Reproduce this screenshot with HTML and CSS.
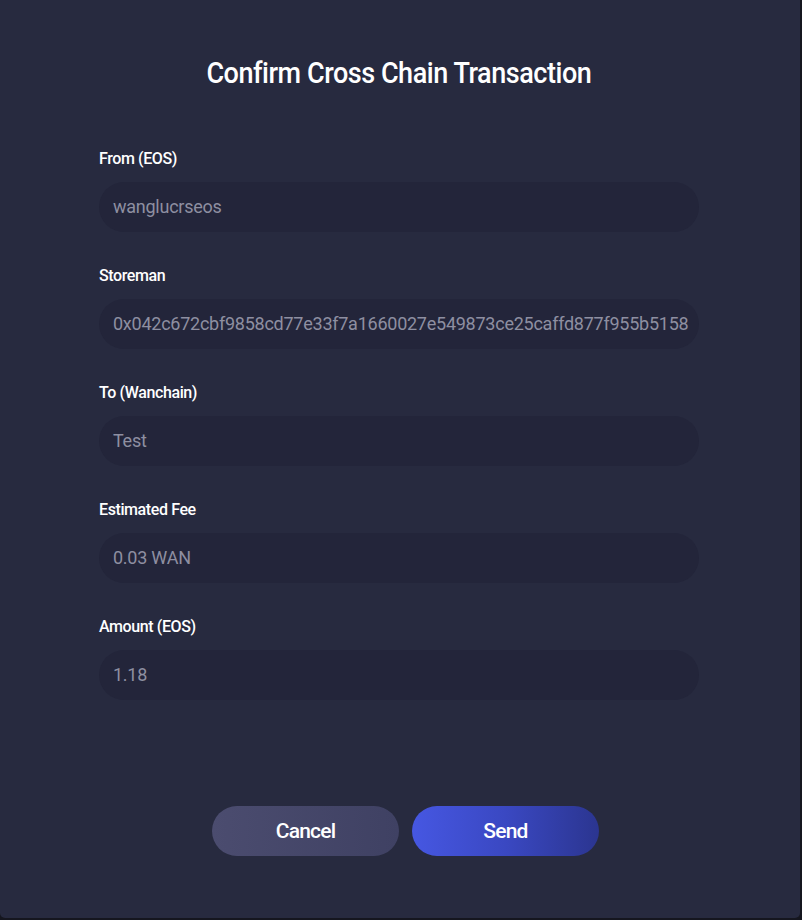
FILE: index.html
```html
<!DOCTYPE html>
<html lang="en">
<head>
<meta charset="utf-8">
<title>Confirm Cross Chain Transaction</title>
<link rel="stylesheet" href="styles.css">
</head>
<body>
<div class="modal">
  <h1 class="modal-title"><span class="modal-title-text">Confirm Cross Chain Transaction</span></h1>
  <div class="form">
    <div class="field">
      <label class="field-label">From (EOS)</label>
      <div class="field-input">wanglucrseos</div>
    </div>
    <div class="field">
      <label class="field-label">Storeman</label>
      <div class="field-input">0x042c672cbf9858cd77e33f7a1660027e549873ce25caffd877f955b5158</div>
    </div>
    <div class="field">
      <label class="field-label">To (Wanchain)</label>
      <div class="field-input">Test</div>
    </div>
    <div class="field">
      <label class="field-label">Estimated Fee</label>
      <div class="field-input">0.03 WAN</div>
    </div>
    <div class="field">
      <label class="field-label">Amount (EOS)</label>
      <div class="field-input">1.18</div>
    </div>
  </div>
  <div class="actions">
    <button class="btn btn-cancel">Cancel</button>
    <button class="btn btn-send">Send</button>
  </div>
</div>
</body>
</html>
```

FILE: styles.css
```css
html, body {
  margin: 0;
  padding: 0;
  background: #15161f;
}
body {
  width: 802px;
  height: 920px;
  font-family: Roboto, "Liberation Sans", sans-serif;
}
.modal {
  box-sizing: border-box;
  width: 800px;
  height: 918px;
  background: #272a3f;
  border-radius: 0 0 5px 5px;
  padding: 55px 101px 0 99px;
  display: flex;
  flex-direction: column;
}
.modal-title {
  margin: 0;
  text-align: center;
  color: #ffffff;
  font-size: 30px;
  line-height: 36px;
  font-weight: 500;
}
.modal-title-text {
  display: inline-block;
  letter-spacing: -0.5px;
  transform: scaleX(0.9);
}
.form {
  margin-top: 58px;
  display: flex;
  flex-direction: column;
  gap: 34px;
}
.field {
  display: flex;
  flex-direction: column;
  gap: 13px;
}
.field-label {
  color: #ffffff;
  font-size: 16px;
  line-height: 20px;
  font-weight: 500;
  letter-spacing: -0.4px;
}
.field-input {
  box-sizing: border-box;
  height: 50px;
  border-radius: 25px;
  background: #23253a;
  padding: 0 14px;
  color: #8e8fa1;
  font-size: 18px;
  line-height: 50px;
  letter-spacing: -0.25px;
  white-space: nowrap;
  overflow: hidden;
}
.actions {
  margin-top: 106px;
  padding-left: 13px;
  display: flex;
  justify-content: center;
  gap: 13px;
}
.btn {
  width: 187px;
  height: 50px;
  border: none;
  border-radius: 25px;
  color: #ffffff;
  font-family: Roboto, "Liberation Sans", sans-serif;
  font-size: 21px;
  font-weight: 500;
  letter-spacing: -0.8px;
  cursor: pointer;
}
.btn-cancel {
  background: linear-gradient(90deg, #4b4c6f 0%, #3f4163 100%);
}
.btn-send {
  background: linear-gradient(90deg, #4657e2 0%, #3a48c2 50%, #2b3590 100%);
}
```
